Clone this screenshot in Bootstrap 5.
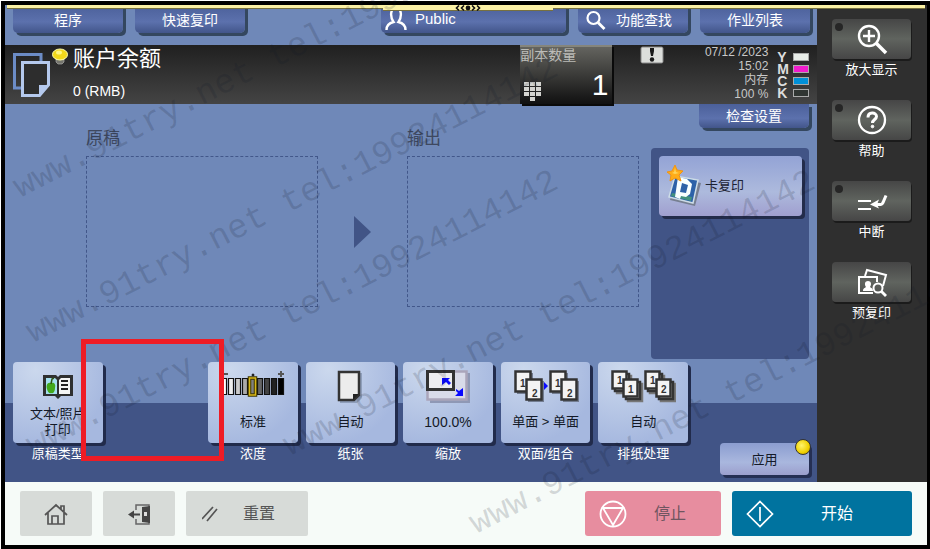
<!DOCTYPE html>
<html lang="zh-CN">
<head>
<meta charset="utf-8">
<meta name="viewport" content="width=device-width, initial-scale=1">
<title>账户余额</title>
<link href="https://cdn.jsdelivr.net/npm/bootstrap@5.3.0/dist/css/bootstrap.min.css" rel="stylesheet">
<style>
body{font-family:"Liberation Sans","Noto Sans CJK SC",sans-serif;font-size:13px;line-height:16px;background:#fff;color:#fff}
button{font-family:inherit;color:inherit;border:0;padding:0;margin:0}
svg{display:block;flex:none}
.device{padding:1px 0 1px 1px;min-height:100vh}
.bezel{border:4px solid #000;border-right-width:3px}
.drawer-strip{top:0;left:2px;right:2px;height:4px;background:#fbf1a5;border-bottom:1px solid #77703f;z-index:2}
.drawer-grip{top:0;left:41%;width:170px;height:6px;background:#fbf1a5;border-bottom:1px solid #77703f;z-index:3}
.screen{background:#6f88b8;min-width:0}
.tab-row{height:40px;padding:0 7px 0 8px;gap:12px}
.tab-btn{width:110px;height:28px;padding-top:2px;font-size:14px;border-radius:0 0 5px 5px;background:linear-gradient(#4b609a,#5c71ad 60%,#42558a);box-shadow:3px 3px 0 #34475f}
.tab-btn.user{width:185px;margin-left:auto;font-size:15px;padding-bottom:2px}
.status{min-height:59px;background:linear-gradient(#202020,#444)}
.title-text{font-size:22px;line-height:28px}
.amount{font-size:14px;line-height:18px;margin-top:9px}
.copies{width:92px;margin-right:28px;border-top:2px solid #85857c;background:linear-gradient(#64645f,#1c1c1c 85%,#111);box-shadow:2px 2px 0 #0a0a0a;font-size:14px;color:#bcbcb8;padding:0 0 3px}
.copies b{font-size:30px;line-height:32px;font-weight:400;color:#fff}
.clock{font-size:12px;line-height:14px;color:#c8c8c8;width:80px}
.toner{font-size:14px;line-height:12px;font-weight:700;color:#ddd;padding:6px 8px 0 9px}
.toner i{width:16px;height:8px;border:1px solid #aaa}
.ink-y{background:#e8ece8}.ink-m{background:#f01ccc}.ink-c{background:#0090d8}.ink-k{background:#303532}
.workspace{min-height:258px;padding-right:8px}
.previews{padding:23px 12px 0 81px}
.preview-title{font-size:17px;line-height:24px;color:#3e4860;margin-bottom:5px}
.preview-box{height:151px;border:1px dashed #42578a}
.arrow-col{width:89px;padding:89px 0 0 36px}
.quick-col{width:158px}
.check-btn{height:24px;padding-top:0}
.quick-panel{margin-top:20px;min-height:211px;padding:8px 7px 8px 8px;border-radius:4px;background:#415486}
.card-btn{height:60px;padding-left:8px;gap:4px;border-radius:4px;color:#1c2233;background:linear-gradient(#93a3d5,#adbadd 60%,#a09fcf);box-shadow:3px 3px 0 #232c4b}
.settings{min-height:120px;padding:0 8px;background:linear-gradient(transparent 41px,#415486 41px)}
.tile-grid{display:grid;grid-template-columns:repeat(7,minmax(0,1fr));gap:8px;margin-right:32px}
.tile{height:81px;border-radius:4px;color:#141a28;background:radial-gradient(circle at 25% 10%,#cbd8ed,#a6b8df 75%);box-shadow:3px 3px 0 #212b4b;padding-top:7px}
.tile svg{height:34px}
.tile span{margin-top:11px}
.tile.long span{margin-top:3px}
.tile .num{font-size:14px}
.tile-label{margin-top:3px}
.apply-btn{width:89px;height:32px;padding-top:2px;border-radius:4px;color:#141a28;background:linear-gradient(#8b9dd0,#a9b7de 60%,#9c9fcd);box-shadow:3px 3px 0 #252f53;margin-bottom:7px}
.lamp{width:16px;height:16px;right:-2px;top:-4px;border:1px solid #333;background:radial-gradient(circle at 40% 40%,#fff36b,#f0d000 60%,#a88700)}
.side{width:110px;background:#2f2f2f;padding:14px 16px 0 15px;gap:22px}
.side-key{height:40px;border-radius:4px;background:linear-gradient(#464646,#60645f 50%,#464646);box-shadow:1px 2px 0 #1b1b1b}
.side-key .led{left:3px;top:4px;width:8px;height:8px;background:#262626}
.side label{margin-top:3px;line-height:16px}
.footer-bar{background:#f6fbf8;padding:9px 15px;gap:11px;font-size:16px}
.foot-btn{height:45px;border-radius:2px;background:#d7dbd8;color:#555}
.w-key{width:72px}.w-reset{width:122px}.w-stop{width:136px}.w-start{width:180px}
.foot-btn.stop{background:#e78d9f;color:#6f5560;border-radius:3px;padding:0 8px 0 14px}
.foot-btn.start{background:#00739f;color:#fff;border-radius:3px;padding:0 12px 0 14px}
.marks{inset:0;width:100%;height:100%;z-index:5;pointer-events:none;font:34px "Liberation Mono",monospace;fill:#101828;fill-opacity:.17}
.focus-frame{left:81px;top:339px;width:143px;height:122px;border:5px solid #ee1c25;z-index:6;pointer-events:none}
</style>
</head>
<body>
<div class="device position-relative d-flex overflow-hidden">
<div class="bezel flex-fill d-flex flex-column position-relative">
  <div class="drawer-strip position-absolute"></div>
  <div class="drawer-grip position-absolute d-flex justify-content-center">
    <svg width="26" height="6" viewBox="0 0 26 6" fill="none" stroke="#111" stroke-width="1.6"><path d="M4 .5 1.5 3 4 5.500M9 .5 6.500 3 9 5.500M17 .5 19.500 3 17 5.500M22 .5 24.500 3 22 5.500"/><circle cx="13" cy="3" r="1.600" fill="#111"/></svg>
  </div>

  <div class="d-flex flex-fill">
    <main class="screen flex-fill d-flex flex-column">
      <nav class="tab-row d-flex">
        <button class="tab-btn">程序</button>
        <button class="tab-btn">快速复印</button>
        <button class="tab-btn user d-flex align-items-center gap-2 ps-1">
          <svg width="22" height="24" viewBox="0 0 22 24" fill="none" stroke="#fff" stroke-width="2.400"><path d="M11 1C5 1 5 10 8.500 15 4 16 1.500 18 1.500 23M11 1c6 0 6 9 2.500 14 4.500 1 7 3 7 8"/></svg>
          <span>Public</span>
        </button>
        <button class="tab-btn d-flex align-items-center justify-content-between px-2">
          <svg width="20" height="20" viewBox="0 0 20 20" fill="none" stroke="#fff" stroke-width="2.200"><circle cx="7.500" cy="8" r="6"/><path d="m12 12.500 6.500 6.500" stroke-width="2.800"/></svg>
          <span class="pe-1 me-1">功能查找</span>
        </button>
        <button class="tab-btn">作业列表</button>
      </nav>

      <header class="status d-flex">
        <div class="d-flex ps-2 flex-fill">
          <svg width="56" height="59" viewBox="0 0 56 59"><path d="M28 16V9.500H1.500V43H9" fill="none" stroke="#6c8cc6" stroke-width="3"/><path d="M9.500 17.500h26V40l-9 10.500h-17z" fill="#2d2d2d" stroke="#b5c9ed" stroke-width="3"/><path d="M26 51V40h10z" fill="#b5c9ed"/><path d="M43 14h8v3l-2 2h-4l-2-2z" fill="#74746c" stroke="#bbb" stroke-width=".6"/><ellipse cx="47" cy="9.500" rx="7.500" ry="5.500" fill="#f1d81a" stroke="#ffffb0"/><ellipse cx="46" cy="7.500" rx="3" ry="2" fill="#fff680"/></svg>
          <div class="ps-1">
            <div class="title-text">账户余额</div>
            <div class="amount">0 (RMB)</div>
          </div>
        </div>
        <button class="copies d-flex flex-column text-start">
          <span>副本数量</span>
          <span class="d-flex justify-content-between align-items-end flex-fill w-100 pe-1">
            <svg class="ms-1" width="18" height="19" viewBox="0 0 18 19" fill="#d4d4d0"><path d="M0 0h5v4H0zM6 0h5v4H6zM12 0h5v4h-5zM0 5h5v4H0zM6 5h5v4H6zM12 5h5v4h-5zM0 10h5v4H0zM6 10h5v4H6zM12 10h5v4h-5zM6 15h5v4H6z"/></svg>
            <b>1</b>
          </span>
        </button>
        <svg width="24" height="19" viewBox="0 0 24 19"><rect x="1" y="2" width="22" height="16" rx="1.500" fill="#dcdedb" stroke="#888"/><path d="M10 3h4v3l-1 5h-2l-1-5z" fill="#191919"/><circle cx="12" cy="14.500" r="2.200" fill="#191919"/></svg>
        <div class="clock text-end ms-4">07/12 /2023<br>15:02<br>内存<br>100 %</div>
        <div class="toner d-flex flex-column">
          <div class="d-flex justify-content-between align-items-center gap-1"><span>Y</span><i class="ink-y"></i></div>
          <div class="d-flex justify-content-between align-items-center gap-1"><span>M</span><i class="ink-m"></i></div>
          <div class="d-flex justify-content-between align-items-center gap-1"><span>C</span><i class="ink-c"></i></div>
          <div class="d-flex justify-content-between align-items-center gap-1"><span>K</span><i class="ink-k"></i></div>
        </div>
      </header>

      <section class="workspace d-flex flex-fill">
        <div class="previews d-flex flex-fill">
          <div class="flex-fill"><div class="preview-title">原稿</div><div class="preview-box"></div></div>
          <div class="arrow-col"><svg width="18" height="32" viewBox="0 0 18 32"><path d="M0 0 17 16 0 32z" fill="#415486"/></svg></div>
          <div class="flex-fill"><div class="preview-title">输出</div><div class="preview-box"></div></div>
        </div>
        <div class="quick-col d-flex flex-column">
          <button class="tab-btn check-btn align-self-end">检查设置</button>
          <div class="quick-panel">
            <button class="card-btn w-100 d-flex align-items-center">
              <svg width="34" height="42" viewBox="0 0 34 42"><path d="m10 13 24 5-6 23-25-6z" fill="#777f91"/><path d="m8 11 23 4-5 23-24-6z" fill="#2d62a8" stroke="#cddde7" stroke-width="1.500"/><path d="m4 31 20 5 1-4-20-4z" fill="#42927e"/><path fill-rule="evenodd" d="m11 12 9 2 5 5-2 10-4 3-5-1-1 3-5-2zm4 6-2 9 6 1 2-8z" fill="#f8ffff"/><path d="m8 0 2 5 6 1-4 4 2 6-6-3-5 3 1-6-4-3 5-1z" fill="#ffac18" stroke="#ef9414"/><path d="m8 3 1 4 3 1-4 1-3-1 2-1z" fill="#ffd359"/></svg>
              <span>卡复印</span>
            </button>
          </div>
        </div>
      </section>

      <section class="settings d-flex">
        <div class="tile-grid flex-fill">
          <div class="text-center">
            <button class="tile long w-100 d-flex flex-column align-items-center" aria-labelledby="l1">
              <svg width="32" height="34" viewBox="0 0 32 34"><path d="M1 6h13l2 2 2-2h13v21H19l-3 3-3-3H1z" fill="#2f3030"/><path d="M4 9h9l2 2v14H4z" fill="#a5e0ef"/><path d="M17 11l2-2h9v16H17z" fill="#f5f6f5"/><path d="M19 12h7M19 16h7M19 20h7" stroke="#222" stroke-width="2"/><path d="M9 14c-4-1-5 3-4 6 1 4 3 5 4 4 2 1 4-1 4-5 1-4-1-6-4-5z" fill="#43a91c"/><path d="M9 15l1-5 2-1" stroke="#315715" stroke-width="1.500" fill="none"/></svg>
              <span>文本/照片<br>打印</span>
            </button>
            <div class="tile-label" id="l1">原稿类型</div>
          </div>
          <div></div>
          <div class="text-center">
            <button class="tile w-100 d-flex flex-column align-items-center" aria-labelledby="l2">
              <svg width="66" height="34" viewBox="0 0 66 34" stroke="#111"><path d="M3 5h5M58 5h6M61 2v6" stroke="#555" stroke-width="2"/><circle cx="33" cy="6" r="1" fill="#333"/><g stroke-width="1.200"><path d="M1.500 9.500h5v16h-5z" fill="#fff"/><path d="M8.500 9.500h5v16h-5z" fill="#eee"/><path d="M15.500 9.500h5v16h-5z" fill="#ccc"/><path d="M22.500 9.500h5v16h-5z" fill="#aaa"/><path d="M37.500 9.500h5v16h-5z" fill="#666"/><path d="M44.500 9.500h5v16h-5z" fill="#444"/><path d="M51.500 9.500h5v16h-5z" fill="#222"/><path d="M58.500 9.500h5v16h-5z" fill="#000"/></g><path d="M29.500 9h6v17h-6z" fill="#808080" stroke="#3c3500" stroke-width="3.500"/><path d="M29.500 9h6v17h-6z" fill="none" stroke="#d7b718" stroke-width="1.500"/></svg>
              <span>标准</span>
            </button>
            <div class="tile-label" id="l2">浓度</div>
          </div>
          <div class="text-center">
            <button class="tile w-100 d-flex flex-column align-items-center" aria-labelledby="l3">
              <svg width="28" height="34" viewBox="0 0 28 34"><path d="M4 4h22v25l-5 5H4z" fill="#7e8da8" opacity=".7"/><path d="M3 3h20v23l-5 5H3z" fill="#ececec" stroke="#333" stroke-width="2.500"/><path d="M17 31v-6h6z" fill="#222"/></svg>
              <span>自动</span>
            </button>
            <div class="tile-label" id="l3">纸张</div>
          </div>
          <div class="text-center">
            <button class="tile w-100 d-flex flex-column align-items-center" aria-labelledby="l4">
              <svg width="46" height="34" viewBox="0 0 46 34"><path d="M5 4h40v30H5z" fill="#8f98b5"/><path d="M2.500 2.500h39v28h-39z" fill="#d9dbe9" stroke="#aaa5ba" stroke-width="2.500"/><path d="M2.500 2.500h26v18h-26z" fill="#ededf0" stroke="#333" stroke-width="3"/><path d="M17 9h8l-2 2 3 3-2 2-3-3-4 3zM31 20l3 2 4-3v8h-8l3-3-2-2z" fill="#0808ff"/></svg>
              <span class="num">100.0%</span>
            </button>
            <div class="tile-label" id="l4">缩放</div>
          </div>
          <div class="text-center">
            <button class="tile w-100 d-flex flex-column align-items-center" aria-labelledby="l5">
              <svg width="66" height="34" viewBox="0 0 66 34" font-size="10" font-weight="700"><defs><g id="pair"><path d="M4 4h16v21H4zM15 12h16v21H15z" fill="#737d91"/><path d="M2.500 2.500h15v20h-15z" fill="#f3f3f3" stroke="#333" stroke-width="2.500"/><path d="M13.500 10.500h15v20h-15z" fill="#f3f3f3" stroke="#333" stroke-width="2.500"/></g></defs><use href="#pair"/><use href="#pair" x="35"/><path d="M31 13l4 4-4 4z" fill="#0808ff"/><g fill="#333"><text x="7" y="18">1</text><text x="19" y="28">2</text><text x="42" y="18">1</text><text x="54" y="28">2</text></g></svg>
              <span>单面 &gt; 单面</span>
            </button>
            <div class="tile-label" id="l5">双面/组合</div>
          </div>
          <div class="text-center">
            <button class="tile w-100 d-flex flex-column align-items-center" aria-labelledby="l6">
              <svg width="66" height="34" viewBox="0 0 66 34" font-size="10" font-weight="700"><defs><g id="stack" stroke="#333" stroke-width="2.500"><path d="M7 7h14v17H7zM18 15h14v17H18z" fill="#777" stroke="#777"/><path d="M5 5h14v17H5zM16 13h14v17H16z" fill="#ddd"/><path d="M2.500 2.500h14v17h-14z" fill="#f3f3f3"/><path d="M13.500 10.500h14v17h-14z" fill="#f3f3f3"/></g></defs><use href="#stack"/><use href="#stack" x="33"/><g fill="#333"><text x="7" y="15">1</text><text x="18" y="24">1</text><text x="40" y="15">1</text><text x="51" y="24">2</text></g></svg>
              <span>自动</span>
            </button>
            <div class="tile-label" id="l6">排纸处理</div>
          </div>
        </div>
        <button class="apply-btn position-relative align-self-end">应用<span class="lamp position-absolute rounded-circle"></span></button>
      </section>
    </main>

    <aside class="side d-flex flex-column text-center">
      <div class="d-flex flex-column">
        <button id="k1" class="side-key position-relative d-flex align-items-center justify-content-center"><span class="led position-absolute rounded-circle"></span>
          <svg width="32" height="32" viewBox="0 0 32 32" fill="none" stroke="#fff" stroke-width="2.400"><circle cx="13" cy="13" r="10"/><path d="M7 13h12M13 7v12"/><path d="m20 20 10 10" stroke-width="3.500"/></svg></button>
        <label for="k1">放大显示</label>
      </div>
      <div class="d-flex flex-column">
        <button id="k2" class="side-key position-relative d-flex align-items-center justify-content-center"><span class="led position-absolute rounded-circle"></span>
          <svg width="32" height="32" viewBox="0 0 32 32" fill="none" stroke="#fff"><circle cx="16" cy="16" r="13" stroke-width="2.300"/><path d="M12 13.500c0-6 8.500-5.500 8.500-1 0 3-4 3-4 6.500" stroke-width="3"/><circle cx="16.500" cy="22.500" r="1.300" fill="#fff"/></svg></button>
        <label for="k2">帮助</label>
      </div>
      <div class="d-flex flex-column">
        <button id="k3" class="side-key position-relative d-flex align-items-center justify-content-center"><span class="led position-absolute rounded-circle"></span>
          <svg width="32" height="32" viewBox="0 0 32 32" fill="none" stroke="#fff" stroke-width="2"><path d="M2 16h13M2 24h13"/><path d="M19 19.500h6q1 0 2-2l3-7" stroke-width="3"/><path d="m14 19.500 9-5-2 5 2 4z" fill="#fff" stroke="none"/></svg></button>
        <label for="k3">中断</label>
      </div>
      <div class="d-flex flex-column">
        <button id="k4" class="side-key position-relative d-flex align-items-center justify-content-center">
          <svg width="32" height="32" viewBox="0 0 32 32" fill="none" stroke="#fff" stroke-width="2"><path d="M9 10l2-6 19 5-3 11"/><path d="M17 27H3V11h18v5"/><path d="M7 25c0-3 2-3 3-4-2-3-1-6 2-6s4 3 2 6c1 1 3 1 3 4z" fill="#fff" stroke="none"/><circle cx="22" cy="22" r="4.500"/><path d="m25 25 5 5" stroke-width="2.800"/></svg></button>
        <label for="k4">预复印</label>
      </div>
    </aside>
  </div>

  <footer class="footer-bar d-flex">
    <button class="foot-btn w-key d-flex align-items-center justify-content-center" aria-label="主页">
      <svg width="26" height="24" viewBox="0 0 26 24" fill="none" stroke="#555" stroke-width="1.700"><path d="M2 13 13 3l11 10M5 11v11h16V11M9 22v-8h6v8M18 7V4h3v6"/></svg></button>
    <button class="foot-btn w-key d-flex align-items-center justify-content-center" aria-label="退出">
      <svg width="24" height="24" viewBox="0 0 24 24"><path d="M9 8V3h13v19H9v-5" fill="none" stroke="#666" stroke-width="1.500"/><path d="M15 5l8-1v17l-8-1z" fill="#444"/><path d="M17 10h3v4h-3z" fill="#ddd"/><path d="M1 12.500l6-4v3h6v2H7v3z" fill="#444"/></svg></button>
    <button class="foot-btn w-reset d-flex align-items-center ps-3 pe-2">
      <svg width="16" height="18" viewBox="0 0 16 18" stroke="#555" stroke-width="1.700"><path d="M0 14 11 2M5 16 15 4"/></svg>
      <span class="mx-auto">重置</span></button>
    <button class="foot-btn stop w-stop d-flex align-items-center ms-auto">
      <svg width="28" height="28" viewBox="0 0 28 28" fill="none" stroke="#fff" stroke-width="1.800"><circle cx="14" cy="14" r="12.500"/><path d="M4 8h20L14 25z"/></svg>
      <span class="mx-auto">停止</span></button>
    <button class="foot-btn start w-start d-flex align-items-center">
      <svg width="28" height="28" viewBox="0 0 28 28" fill="none" stroke="#fff" stroke-width="1.700"><path d="M14 1.500 26.500 14 14 26.500 1.500 14zM14 7v14"/></svg>
      <span class="mx-auto">开始</span></button>
  </footer>
</div>

<svg class="marks position-absolute" aria-hidden="true">
  <text transform="translate(20 198) rotate(-27)">www.91try.net tel:19924114142</text>
  <text transform="translate(33 343) rotate(-27)">www.91try.net tel:19924114142</text>
  <text transform="translate(33 456) rotate(-27)">www.91try.net tel:19924114142</text>
  <text transform="translate(290 456) rotate(-27)">www.91try.net tel:19924114142</text>
  <text transform="translate(476 534) rotate(-27)">www.91try.net tel:19924114142</text>
</svg>
<div class="focus-frame position-absolute"></div>
</div>
<script src="https://cdn.jsdelivr.net/npm/bootstrap@5.3.0/dist/js/bootstrap.bundle.min.js"></script>
</body>
</html>
